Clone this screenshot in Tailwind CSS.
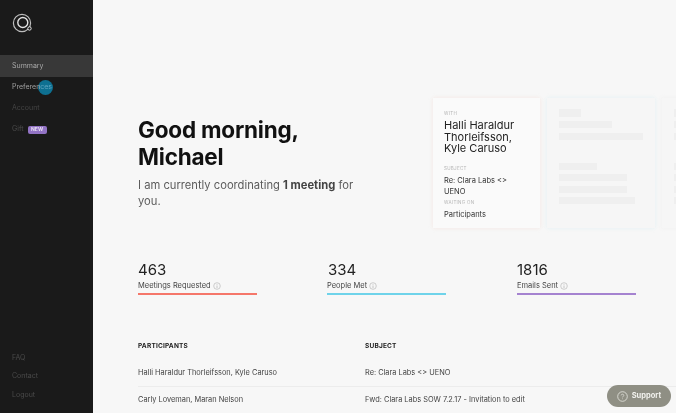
<!doctype html>
<html>
<head>
<meta charset="utf-8">
<script src="https://cdn.jsdelivr.net/npm/@tailwindcss/browser@4"></script>
</head>
<body class="m-0 bg-[#f8f8f8]">
<div class="flex h-[413px] w-[676px] overflow-hidden bg-[#f7f7f7] font-['Inter',sans-serif] blur-[0.35px]">
  <aside class="flex w-[93px] shrink-0 flex-col bg-[#1a1a1a] text-[7px]">
    <div class="pl-[12px] pt-[12px]">
      <svg width="22" height="22" viewBox="0 0 22 22" fill="none" class="block">
        <circle cx="10" cy="11" r="8.6" stroke="#bdbdbd" stroke-width="1.2"/>
        <circle cx="10.8" cy="10.5" r="5" stroke="#e2e2e2" stroke-width="1.4"/>
        <circle cx="17.5" cy="16.5" r="1.7" fill="#1a1a1a" stroke="#e2e2e2" stroke-width="1"/>
      </svg>
    </div>
    <nav class="mt-[21px] flex flex-col">
      <div class="flex h-[22px] items-center bg-[#383838] pl-[12px] text-[#a8a8a8]">Summary</div>
      <div class="relative flex h-[21px] items-center pl-[12px] text-[#a0a0a0]">
        <span class="absolute left-[38px] top-[2.5px] h-[15px] w-[15px] rounded-full bg-[#0e7091]"></span>
        <span class="relative">Preferen<span class="text-[#5fa5c0]">ces</span></span>
      </div>
      <div class="flex h-[21px] items-center pl-[12px] text-[#444444]">Account</div>
      <div class="flex h-[21px] items-center gap-[4px] pl-[12px] text-[#4c4c4c]">Gift<span class="flex h-[8px] w-[19px] items-center justify-center rounded-[2px] bg-[#9273c4] text-[5px] font-bold text-[#e6ddf2]">NEW</span></div>
    </nav>
    <div class="mt-auto flex flex-col pb-[9px] pl-[12px] text-[#4a4a4a]">
      <div class="flex h-[18px] items-center">FAQ</div>
      <div class="flex h-[19px] items-center">Contact</div>
      <div class="flex h-[18px] items-center">Logout</div>
    </div>
  </aside>

  <main class="relative min-w-0 flex-1 pt-[98px]">
    <section class="flex h-[130px]">
      <div class="w-[340px] shrink-0 pl-[45px] pt-[18px]">
        <h1 class="text-[22.5px] leading-[27px] font-bold tracking-[-0.2px] text-[#111111]">Good morning,<br>Michael</h1>
        <p class="mt-[7px] w-[225px] text-[11.2px] leading-[16px] text-[#5c5c5c]">I am currently coordinating <b class="font-bold text-[#444444]">1 meeting</b> for you.</p>
      </div>
      <div class="flex gap-[7px]">
        <article class="w-[107px] shrink-0 bg-[#fafafa] pl-[11px] pt-[13px] shadow-[0_0_4px_rgba(240,200,190,0.35)]">
          <div class="text-[4.5px] leading-[6px] tracking-[0.3px] text-[#b5b5b5]">WITH</div>
          <div class="mt-[3px] w-[80px] text-[11px] leading-[11.5px] text-[#222222]">Halli Haraldur Thorleifsson, Kyle Caruso</div>
          <div class="mt-[11px] text-[4.5px] leading-[6px] tracking-[0.3px] text-[#b5b5b5]">SUBJECT</div>
          <div class="mt-[3px] w-[75px] text-[7.5px] leading-[11px] text-[#333333]">Re: Clara Labs &lt;&gt; UENO</div>
          <div class="mt-[3px] text-[4.5px] leading-[6px] tracking-[0.3px] text-[#b5b5b5]">WAITING ON</div>
          <div class="mt-[4px] text-[7.5px] leading-[10px] text-[#333333]">Participants</div>
        </article>
        <article class="flex w-[108px] shrink-0 flex-col bg-[#f6f6f6] pl-[12px] pt-[11px] shadow-[0_0_4px_rgba(190,230,240,0.35)]">
          <div class="h-[8px] w-[22px] bg-[#efefef]"></div>
          <div class="mt-[4px] h-[7px] w-[53px] bg-[#efefef]"></div>
          <div class="mt-[5px] h-[7px] w-[84px] bg-[#efefef]"></div>
          <div class="mt-[23px] h-[7px] w-[38px] bg-[#efefef]"></div>
          <div class="mt-[4px] h-[7px] w-[68px] bg-[#efefef]"></div>
          <div class="mt-[5px] h-[7px] w-[68px] bg-[#efefef]"></div>
          <div class="mt-[4px] h-[7px] w-[76px] bg-[#efefef]"></div>
        </article>
        <article class="flex w-[108px] shrink-0 flex-col bg-[#f6f6f6] pl-[12px] pt-[11px] shadow-[0_0_4px_rgba(230,230,230,0.4)]">
          <div class="h-[8px] w-[22px] bg-[#efefef]"></div>
          <div class="mt-[4px] h-[7px] w-[53px] bg-[#efefef]"></div>
          <div class="mt-[5px] h-[7px] w-[84px] bg-[#efefef]"></div>
          <div class="mt-[23px] h-[7px] w-[38px] bg-[#efefef]"></div>
          <div class="mt-[4px] h-[7px] w-[68px] bg-[#efefef]"></div>
          <div class="mt-[5px] h-[7px] w-[68px] bg-[#efefef]"></div>
          <div class="mt-[4px] h-[7px] w-[76px] bg-[#efefef]"></div>
        </article>
      </div>
    </section>

    <section class="mt-[33px] flex pl-[45px]">
      <div class="w-[189px] shrink-0">
        <div class="text-[15px] leading-[17px] text-[#222222]">463</div>
        <div class="mt-[2px] flex h-[12px] items-center gap-[2px] text-[7.5px] text-[#444444]">Meetings Requested
          <svg width="8" height="8" viewBox="0 0 8 8" fill="none"><circle cx="4" cy="4" r="3.3" stroke="#b0b0b0" stroke-width=".6"/><path d="M4 3.5V6M4 2v.7" stroke="#b0b0b0" stroke-width=".7"/></svg>
        </div>
        <div class="mt-[1px] h-[2px] w-[119px] bg-[#f5776a]"></div>
      </div>
      <div class="w-[190px] shrink-0">
        <div class="pl-[1px] text-[15px] leading-[17px] text-[#222222]">334</div>
        <div class="mt-[2px] flex h-[12px] items-center gap-[2px] text-[7.5px] text-[#444444]">People Met
          <svg width="8" height="8" viewBox="0 0 8 8" fill="none"><circle cx="4" cy="4" r="3.3" stroke="#b0b0b0" stroke-width=".6"/><path d="M4 3.5V6M4 2v.7" stroke="#b0b0b0" stroke-width=".7"/></svg>
        </div>
        <div class="mt-[1px] h-[2px] w-[119px] bg-[#6fd3ea]"></div>
      </div>
      <div class="w-[119px] shrink-0">
        <div class="text-[15px] leading-[17px] text-[#222222]">1816</div>
        <div class="mt-[2px] flex h-[12px] items-center gap-[2px] text-[7.5px] text-[#444444]">Emails Sent
          <svg width="8" height="8" viewBox="0 0 8 8" fill="none"><circle cx="4" cy="4" r="3.3" stroke="#b0b0b0" stroke-width=".6"/><path d="M4 3.5V6M4 2v.7" stroke="#b0b0b0" stroke-width=".7"/></svg>
        </div>
        <div class="mt-[1px] h-[2px] w-[119px] bg-[#a583d0]"></div>
      </div>
    </section>

    <section class="mt-[45px] pl-[45px] text-[7.4px] text-[#444444]">
      <div class="flex h-[14px] items-center text-[6.5px] font-bold tracking-[0.2px] text-[#222222]">
        <div class="w-[227px] shrink-0">PARTICIPANTS</div><div>SUBJECT</div>
      </div>
      <div class="mt-[5px] flex h-[28px] items-center border-b border-[#ececec]">
        <div class="w-[227px] shrink-0">Halli Haraldur Thorleifsson, Kyle Caruso</div><div>Re: Clara Labs &lt;&gt; UENO</div>
      </div>
      <div class="flex h-[25px] items-center">
        <div class="w-[227px] shrink-0">Carly Loveman, Maran Nelson</div><div>Fwd: Clara Labs SOW 7.2.17 - Invitation to edit</div>
      </div>
    </section>

    <button class="absolute bottom-[6px] right-[5px] flex h-[22px] w-[64px] items-center justify-center gap-[4px] rounded-full bg-[#8f8f84] text-[7.5px] font-bold text-[#f2f2ee]">
      <svg width="11" height="11" viewBox="0 0 11 11" fill="none"><circle cx="5.5" cy="5.5" r="4.8" stroke="#e8e8e2" stroke-width=".8"/><path d="M4.2 4.4c0-1.6 2.6-1.6 2.6 0 0 1-1.3 1-1.3 2M5.5 7.5v.7" stroke="#e8e8e2" stroke-width=".7"/></svg>
      Support
    </button>
  </main>
</div>
</body>
</html>
